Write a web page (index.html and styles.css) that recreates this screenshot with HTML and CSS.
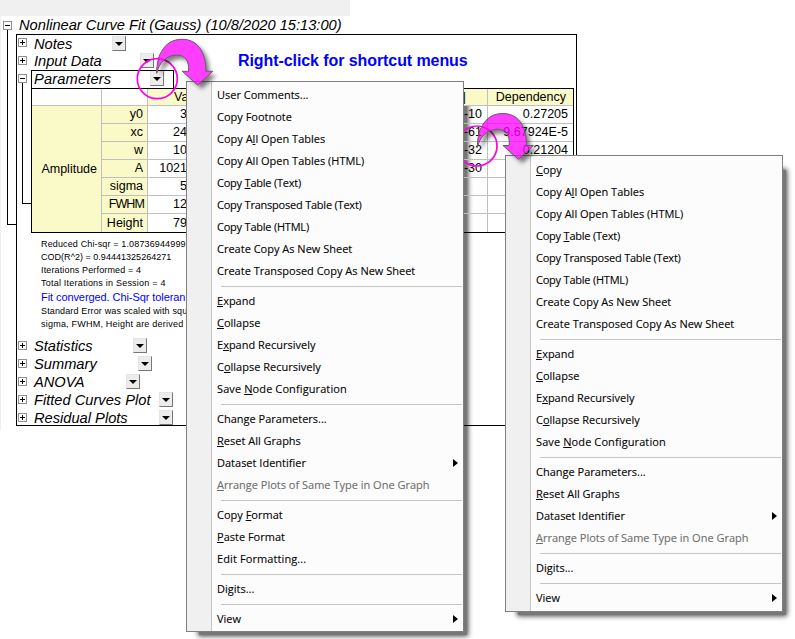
FILE: index.html
```html
<!DOCTYPE html>
<html lang="en">
<head>
<meta charset="utf-8">
<title>Nonlinear Curve Fit</title>
<link rel="stylesheet" href="styles.css">
</head>
<body>
<div class="strip"></div>
<main class="report">
  <div class="title"><i class="toggle minus"></i><span>Nonlinear Curve Fit (Gauss) (10/8/2020 15:13:00)</span></div>
  <div class="tree">
    <div class="outer-line"></div>
    <section class="box">
      <div class="node first"><i class="toggle"></i><span class="name w-notes">Notes</span><b class="drop"></b></div>
      <div class="node"><i class="toggle"></i><span class="name w-input">Input Data</span><b class="drop"></b><strong class="callout">Right-click for shortcut menus</strong></div>
      <div class="node"><i class="toggle minus"></i><div class="selected"><span class="name w-params">Parameters</span><b class="drop"></b></div></div>
      <div class="params">
        <div class="inner-line"></div>
        <table>
          <colgroup><col class="c1"><col class="c2"><col class="c3"><col class="c4"><col class="c5"></colgroup>
          <tr class="head"><td class="plain"></td><td class="plain"></td><th class="value">Value</th><th class="prob">Prob&gt;|t|</th><th class="dep">Dependency</th></tr>
          <tr><th rowspan="7" class="group">Amplitude</th><th>y0</th><td class="num">3</td><td>E-10</td><td>0.27205</td></tr>
          <tr><th>xc</th><td class="num">24</td><td>E-61</td><td>9.67924E-5</td></tr>
          <tr><th>w</th><td class="num">10</td><td>E-32</td><td>0.21204</td></tr>
          <tr><th>A</th><td class="num">1021</td><td>E-30</td><td></td></tr>
          <tr><th>sigma</th><td class="num">5</td><td></td><td></td></tr>
          <tr><th class="tight">FWHM</th><td class="num">12</td><td></td><td></td></tr>
          <tr><th>Height</th><td class="num">79</td><td></td><td></td></tr>
        </table>
      </div>
      <div class="notes">
        <p>Reduced Chi-sqr = 1.08736944999</p>
        <p class="cod">COD(R^2) = 0.94441325264271</p>
        <p>Iterations Performed = 4</p>
        <p class="loose">Total Iterations in Session = 4</p>
        <p class="converged">Fit converged. Chi-Sqr toleran</p>
        <p>Standard Error was scaled with squ</p>
        <p class="loose">sigma, FWHM, Height are derived</p>
      </div>
      <div class="node"><i class="toggle"></i><span class="name w-stat">Statistics</span><b class="drop"></b></div>
      <div class="node"><i class="toggle"></i><span class="name w-sum">Summary</span><b class="drop"></b></div>
      <div class="node"><i class="toggle"></i><span class="name w-anova">ANOVA</span><b class="drop"></b></div>
      <div class="node"><i class="toggle"></i><span class="name w-plot">Fitted Curves Plot</span><b class="drop"></b></div>
      <div class="node"><i class="toggle"></i><span class="name w-plot">Residual Plots</span><b class="drop"></b></div>
    </section>
  </div>
</main>

<svg class="overlay" width="795" height="639"><g fill="none" stroke="#ff00e6" stroke-width="1.7"><circle cx="157.3" cy="78.7" r="20"/><circle cx="477" cy="146" r="20"/></g></svg>

<nav class="menu menu-table">
  <ul>
    <li>User Comments...</li>
    <li>Copy Footnote</li>
    <li>Copy A<u>l</u>l Open Tables</li>
    <li>Copy All Open Tables (HTML)</li>
    <li class="tight">Copy <u>T</u>able (Text)</li>
    <li class="tight">Copy Transposed Table (Text)</li>
    <li class="tight">Copy Table (HTML)</li>
    <li>Create Copy As New Sheet</li>
    <li>Create Transposed Copy As New Sheet</li>
    <li class="sep"></li>
    <li><u>E</u>xpand</li>
    <li><u>C</u>ollapse</li>
    <li>E<u>x</u>pand Recursively</li>
    <li>C<u>o</u>llapse Recursively</li>
    <li class="wide">Save <u>N</u>ode Configuration</li>
    <li class="sep"></li>
    <li>Change Parameters...</li>
    <li><u>R</u>eset All Graphs</li>
    <li class="sub">Dataset Identifier</li>
    <li class="off"><u>A</u>rrange Plots of Same Type in One Graph</li>
    <li class="sep"></li>
    <li>Copy <u>F</u>ormat</li>
    <li><u>P</u>aste Format</li>
    <li class="wide">Edit Formatting...</li>
    <li class="sep"></li>
    <li>Digits...</li>
    <li class="sep"></li>
    <li class="sub">View</li>
  </ul>
</nav>

<nav class="menu menu-cell">
  <ul>
    <li><u>C</u>opy</li>
    <li>Copy A<u>l</u>l Open Tables</li>
    <li>Copy All Open Tables (HTML)</li>
    <li class="tight">Copy <u>T</u>able (Text)</li>
    <li class="tight">Copy Transposed Table (Text)</li>
    <li class="tight">Copy Table (HTML)</li>
    <li>Create Copy As New Sheet</li>
    <li>Create Transposed Copy As New Sheet</li>
    <li class="sep"></li>
    <li><u>E</u>xpand</li>
    <li><u>C</u>ollapse</li>
    <li>E<u>x</u>pand Recursively</li>
    <li>C<u>o</u>llapse Recursively</li>
    <li class="wide">Save <u>N</u>ode Configuration</li>
    <li class="sep"></li>
    <li>Change Parameters...</li>
    <li><u>R</u>eset All Graphs</li>
    <li class="sub">Dataset Identifier</li>
    <li class="off"><u>A</u>rrange Plots of Same Type in One Graph</li>
    <li class="sep"></li>
    <li>Digits...</li>
    <li class="sep"></li>
    <li class="sub">View</li>
  </ul>
</nav>

<svg class="overlay" width="795" height="639">
  <defs><path id="arrow" d="M156.6 73.3C157 64 158 57 161.5 51.5C166 43.5 173 39.3 182 39.3C197 39.3 205.8 51 205.8 71.3H212.7L197.7 85L182.3 71.3H188.5C189.5 61 185 55 177 55C166 55 159 63 156.6 73.3Z"/>
  <mask id="outside"><rect width="795" height="639" fill="#fff"/><use href="#arrow" fill="#000"/><use href="#arrow" x="320.7" y="74.2" fill="#000"/></mask></defs>
  <g mask="url(#outside)"><g class="arrow-shadow"><use href="#arrow"/><use href="#arrow" x="320.7" y="74.2"/></g></g>
  <g fill="#ff00ff" fill-opacity=".76" stroke="#6e5a6e" stroke-width="1"><use href="#arrow"/><use href="#arrow" x="320.7" y="74.2"/></g>
</svg>
</body>
</html>
```
FILE: styles.css
```css
* { box-sizing: border-box; }
html, body { margin: 0; height: 639px; overflow: hidden; }
body { position: relative; width: 795px; background: #fff; color: #000; font-family: "Liberation Sans", Arial, sans-serif; }
ul, p { margin: 0; padding: 0; list-style: none; }
.strip { width: 350px; height: 16px; background: #f0f0f0; }
.report { width: 577px; height: 414px; border-left: 1px solid #f0f0f0; }
.title { display: flex; align-items: center; height: 18px; padding-left: 2px; font-size: 14.67px; font-style: italic; line-height: 18px; white-space: nowrap; }
.title span { margin-left: 7px; letter-spacing: 0; }
.toggle { position: relative; flex: none; width: 9px; height: 9px; border: 1px solid #909090; background: #fff; }
.toggle::before, .toggle::after { content: ""; position: absolute; background: #000; }
.toggle::before { left: 1px; top: 3px; width: 5px; height: 1px; }
.toggle::after { left: 3px; top: 1px; width: 1px; height: 5px; }
.toggle.minus::after { display: none; }
.tree { display: flex; align-items: flex-start; }
.outer-line { width: 9px; height: 196px; margin: -5px 0 0 6px; border: solid #000; border-width: 0 0 1px 1px; }
.box { width: 561px; height: 392px; border: 1px solid #000; }
.node { display: flex; align-items: center; height: 18px; padding-left: 1px; }
.node.first { height: 17px; }
.node .toggle { margin-top: -2px; }
.name { margin-left: 7px; padding-top: 1px; font-size: 14.67px; line-height: 17px; font-style: italic; white-space: nowrap; }
.drop { position: relative; flex: none; width: 14px; height: 15px; margin-top: -1px; background: #ececec; border: 1px solid; border-color: #e4e4e4 #777 #777 #e4e4e4; }
.drop::after { content: ""; position: absolute; left: 2px; top: 5px; border: solid transparent; border-width: 4px 4px 0; border-top-color: #000; }
.w-notes { width: 78px; }
.w-input { width: 106px; }
.w-params { width: 116px; margin-left: 2px; letter-spacing: 0.15px; }
.w-stat { width: 99px; }
.w-sum { width: 104px; }
.w-anova { width: 92px; }
.w-plot { width: 125px; }
.callout { margin-left: 84px; color: #00f; font-size: 16px; line-height: 18px; letter-spacing: -0.08px; white-space: nowrap; }
.selected { display: flex; align-items: center; width: 143px; height: 19px; margin-left: 4px; border: 1px solid #000; }
.params { display: flex; align-items: flex-start; }
.inner-line { flex: none; width: 9px; height: 122px; margin: -6px 0 0 5px; border: solid #000; border-width: 0 0 1px 1px; }
table { width: 543px; height: 145px; table-layout: fixed; border-collapse: separate; border-spacing: 0; border: 1px solid #000; font-size: 12.5px; line-height: 17px; }
.c1 { width: 70px; } .c2 { width: 46px; } .c3 { width: 120px; } .c4 { width: 220px; } .c5 { width: 85px; }
td, th { height: 18px; padding: 0 5px 0 0; text-align: right; font-weight: normal; white-space: nowrap; border: solid #c0c0c0; border-width: 0 1px 1px 0; vertical-align: middle; }
tr > :last-child { border-right: 0; }
tr:last-child > *, .group { border-bottom: 0; }
th { padding-right: 4px; background: #fafac8; }
th.tight { letter-spacing: -0.9px; padding-right: 3px; }
td.num { padding-right: 80px; }
.head > * { height: 17px; line-height: 16px; }
th.value { padding: 0 0 0 26px; text-align: left; }
th.prob { padding-right: 21px; }
th.dep { padding-right: 7px; }
.notes { padding: 5px 0 0 24px; font-size: 9px; line-height: 13px; letter-spacing: 0.14px; white-space: nowrap; height: 104px; }
.notes .cod { letter-spacing: 0.03px; }
.notes .loose { letter-spacing: 0.22px; }
.notes .converged { color: #00f; font-size: 11px; line-height: 15px; letter-spacing: -0.08px; }
.overlay { position: absolute; left: 0; top: 0; }
.arrow-shadow { filter: drop-shadow(4px 4px 2px rgba(0,0,0,.5)); }
.menu { position: absolute; width: 278px; border: 1px solid #808080; font-family: "Open Sans", "Noto Sans", sans-serif; font-size: 11px; letter-spacing: 0; -webkit-text-stroke: 0.1px currentColor; }
.menu::before { content: ""; position: absolute; z-index: -1; inset: 14px -4px -4px 12px; box-shadow: 0 0 5px 1px rgba(0,0,0,.75); background: #777; }
.menu ul { height: 100%; background: linear-gradient(90deg, #f0f0f0 24px, #c6c6c6 24px, #c6c6c6 25px, #fcfcfc 25px); }
.menu li { position: relative; height: 22px; padding-left: 30px; line-height: 22px; white-space: nowrap; }
.menu u { text-decoration-thickness: 1px; text-underline-offset: 1px; }
.menu li.tight { letter-spacing: -0.22px; }
.menu li.wide { letter-spacing: 0.1px; }
.menu li.sep { height: 8px; padding: 4px 1px 0 34px; }
.menu li.sep::after { content: ""; display: block; height: 1px; background: #c6c6c6; }
.menu li.off { color: #6d6d6d; }
.menu li.sub::after { content: ""; position: absolute; right: 5px; top: 7px; border: solid transparent; border-width: 4px 0 4px 5px; border-left-color: #000; }
.menu-table { left: 186px; top: 81px; height: 551px; }
.menu-table ul { padding-top: 2px; }
.menu-cell { left: 505px; top: 155px; height: 457px; }
.menu-cell ul { padding-top: 3px; }
```
